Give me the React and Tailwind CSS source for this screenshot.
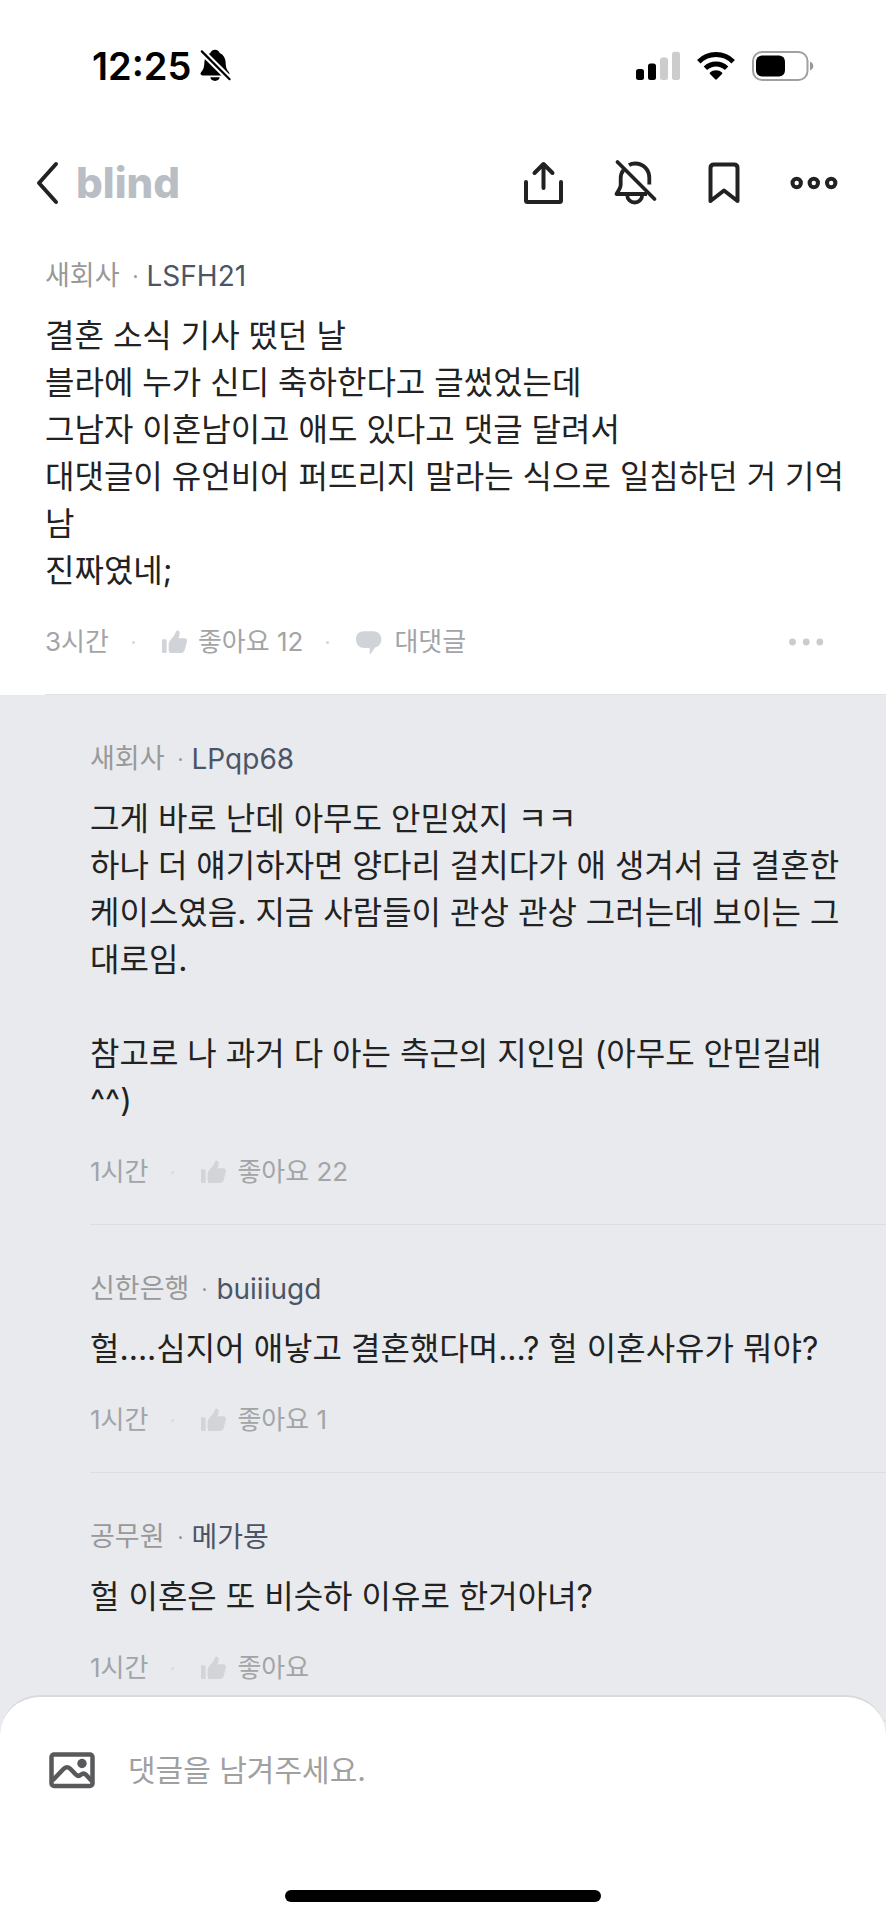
import React from "react";

const LINE = "#222222";

function SilentBell() {
  return (
    <svg width="34" height="34" viewBox="0 0 34 34" aria-hidden="true">
      <path d="M16 .8c-2.400 0-4.200 1.300-4.700 3.200C7.500 5.700 5.600 9 5.400 13c-.2 5.200-.8 7.200-3.200 10-1.400 1.700-.4 3.400 1.400 3.400h24.800c1.800 0 2.800-1.700 1.400-3.400-2.400-2.800-3-4.800-3.200-10-.2-4-2.100-7.300-5.900-9C20.200 2.100 18.400.8 16 .8z" fill="#000" />
      <path d="M11.300 28.300h9.400c-.3 2.200-2.300 3.600-4.700 3.600s-4.400-1.400-4.700-3.600z" fill="#000" />
      <path d="M1.500 1.100 31.900 31.500" stroke="#fff" strokeWidth="6.400" />
      <path d="M2.800 2.400 30.600 30.200" stroke="#000" strokeWidth="2.200" strokeLinecap="round" />
    </svg>
  );
}

function Signal() {
  return (
    <svg width="44" height="30" viewBox="0 0 44 30" aria-hidden="true">
      <rect x="0" y="18" width="8" height="11" rx="2.500" fill="#000" />
      <rect x="12" y="12.500" width="8" height="16.500" rx="2.500" fill="#000" />
      <rect x="24" y="6.500" width="8" height="22.500" rx="2.500" fill="#ccc" />
      <rect x="36" y=".8" width="8" height="28.200" rx="2.500" fill="#ccc" />
    </svg>
  );
}

function Wifi() {
  return (
    <svg width="38" height="30" viewBox="0 0 38 30" aria-hidden="true">
      <g fill="none" stroke="#000" strokeWidth="5">
        <path d="M1.800 10.700C11.500 1.200 26.500 1.200 36.200 10.700" />
        <path d="M8.400 17.300c6-5.700 15.200-5.700 21.200 0" />
      </g>
      <path d="M13 21.600c3.500-3 8.500-3 12 0 .5.500.5 1 0 1.500l-5.200 5.200c-.5.500-1.100.5-1.600 0L13 23.100c-.5-.5-.5-1 0-1.500z" fill="#000" />
    </svg>
  );
}

function Battery() {
  return (
    <svg width="62" height="30" viewBox="0 0 62 30" aria-hidden="true">
      <rect x="1" y="1" width="54.500" height="28" rx="9" fill="none" stroke="#a0a0a0" strokeWidth="2" />
      <rect x="4" y="4.500" width="29" height="21" rx="6" fill="#000" />
      <path d="M58 10.500c2 .8 3.300 2.400 3.300 4.500s-1.300 3.700-3.300 4.500z" fill="#999" />
    </svg>
  );
}

function ThumbIcon({ className }) {
  return (
    <svg width="26" height="25" viewBox="0 0 78 75" className={className} aria-hidden="true">
      <rect x="0" y="28" width="14" height="41" rx="4" fill="currentColor" />
      <path d="M20 43q0-8 6-14l11-13 5-11q2-5 7-3 5 2 4 9l-3 14h17q9 0 8 9l-7 26q-3 9-11 9H27q-7 0-7-7z" fill="currentColor" />
    </svg>
  );
}

function BubbleIcon({ className }) {
  return (
    <svg width="26" height="25" viewBox="0 0 78 75" className={className} aria-hidden="true">
      <path d="M24 4h28c14 0 24 9 24 24 0 13-7 22-18 24L44 71c-1 1-3 1-3-1V54H24C9 54 0 43 0 28S9 4 24 4z" fill="currentColor" />
    </svg>
  );
}

function NavBar() {
  return (
    <header className="flex h-[102px] shrink-0 items-center justify-between pr-12 pl-8">
      <a href="#back" aria-label="뒤로" className="flex items-center">
        <svg width="44" height="44" viewBox="0 0 44 44" fill="none" stroke={LINE} strokeWidth="4" strokeLinecap="round" strokeLinejoin="round" aria-hidden="true">
          <path d="M24 3 7 22l17 19" />
        </svg>
        <span className="text-[42px] leading-[44px] font-extrabold text-[#b9bdc4]">blind</span>
      </a>
      <div className="flex items-center gap-11">
        <button type="button" aria-label="공유">
          <svg width="48" height="44" viewBox="0 0 48 44" fill="none" stroke={LINE} strokeWidth="4" strokeLinecap="round" strokeLinejoin="round" aria-hidden="true">
            <path d="M21.500 27V3.500M12.500 12l9-9 9 9M4 21v18.500q0 1.500 1.500 1.500h32q1.500 0 1.500-1.500V21" />
          </svg>
        </button>
        <button type="button" aria-label="알림 끄기">
          <svg width="44" height="44" viewBox="0 0 44 44" fill="none" stroke={LINE} strokeWidth="3.800" strokeLinejoin="round" className="overflow-visible" aria-hidden="true">
            <path d="M15 4.200c1.800-1.200 4-1.700 6.200-1.700 8.200 0 14.100 6.200 14.100 14.500v6.500" />
            <path d="M9.500 9C7.500 11.500 6.700 14 6.700 17.300V24c0 3-1.500 4-4.200 9H33" />
            <path d="M13.300 34.500a7.400 7 0 0 0 14.800 0" />
            <path d="M3.500 1 40.500 38" strokeLinecap="round" />
          </svg>
        </button>
        <button type="button" aria-label="북마크">
          <svg width="44" height="44" viewBox="0 0 44 44" fill="none" stroke={LINE} strokeWidth="4" strokeLinejoin="round" aria-hidden="true">
            <path d="M8.500 40V7q0-3.500 3.500-3.500h20q3.500 0 3.500 3.500v33L22 29.500z" />
          </svg>
        </button>
        <button type="button" aria-label="더보기">
          <svg width="48" height="44" viewBox="0 0 48 44" fill="none" stroke={LINE} strokeWidth="4" aria-hidden="true">
            <circle cx="6.700" cy="22" r="4.200" />
            <circle cx="23.800" cy="22" r="4.200" />
            <circle cx="41.200" cy="22" r="4.200" />
          </svg>
        </button>
      </div>
    </header>
  );
}

function Author({ company, name }) {
  return (
    <div className="flex items-center text-[27px] leading-9">
      <span className="text-[#999]">{company}</span>
      <span className="mr-[10px] ml-[14px] size-[3px] rounded-full bg-[#999]" />
      <a href="#author" className="text-[28px] text-[#4b5566]">{name}</a>
    </div>
  );
}

function Dot({ className }) {
  return <span className={`mr-[27px] ml-[23px] size-[3px] rounded-full ${className}`} />;
}

function Meta({ time, likes, iconColor, dotColor, reply }) {
  return (
    <div className="mt-[30px] flex h-9 items-center text-[26px] leading-9 text-[#a3a4a6]">
      <time>{time}</time>
      <Dot className={dotColor} />
      <button type="button" className="flex items-center gap-[10px]">
        <ThumbIcon className={iconColor} />
        <span>좋아요{likes ? ` ${likes}` : ""}</span>
      </button>
      {reply && (
        <>
          <Dot className={dotColor} />
          <button type="button" className="flex items-center gap-[12px]">
            <BubbleIcon className={iconColor} />
            <span>대댓글</span>
          </button>
          <button type="button" aria-label="댓글 메뉴" className="mr-[22px] ml-auto">
            <svg width="36" height="8" viewBox="0 0 36 8" fill="#ccc" aria-hidden="true">
              <circle cx="4.500" cy="4" r="3.400" />
              <circle cx="18.200" cy="4" r="3.400" />
              <circle cx="31.800" cy="4" r="3.400" />
            </svg>
          </button>
        </>
      )}
    </div>
  );
}

function Body({ children }) {
  return (
    <p className="mt-[18px] text-[32px] leading-[47px] break-all whitespace-pre-line text-[#222]">{children}</p>
  );
}

const replies = [
  {
    company: "새회사",
    name: "LPqp68",
    text: "그게 바로 난데 아무도 안믿었지 ㅋㅋ\n하나 더 얘기하자면 양다리 걸치다가 애 생겨서 급 결혼한 케이스였음. 지금 사람들이 관상 관상 그러는데 보이는 그대로임.\n\n참고로 나 과거 다 아는 측근의 지인임 (아무도 안믿길래\n^^)",
    likes: 22,
  },
  {
    company: "신한은행",
    name: "buiiiugd",
    text: "헐....심지어 애낳고 결혼했다며...? 헐 이혼사유가 뭐야?",
    likes: 1,
  },
  { company: "공무원", name: "메가몽", text: "헐 이혼은 또 비슷하 이유로 한거아녀?", likes: 0 },
];

export default function App() {
  return (
    <div className="flex h-screen flex-col bg-white font-[Inter,'Noto_Sans_CJK_KR',sans-serif]">
      <div className="flex h-[132px] shrink-0 items-center justify-between pr-[72px] pl-[92px]">
        <div className="flex items-center gap-2">
          <span className="text-[38px] leading-[44px] font-semibold text-black">12:25</span>
          <SilentBell />
        </div>
        <div className="flex items-center gap-[17px]">
          <Signal />
          <Wifi />
          <Battery />
        </div>
      </div>
      <NavBar />
      <main className="min-h-0 flex-1 overflow-y-auto bg-[#e8eaee] [scrollbar-width:none]">
        <article className="bg-white pt-6 pl-[45px]">
          <div className="border-b border-[#dfe1e5] pr-10 pb-[34px]">
            <Author company="새회사" name="LSFH21" />
            <Body>
              {"결혼 소식 기사 떴던 날\n블라에 누가 신디 축하한다고 글썼었는데\n그남자 이혼남이고 애도 있다고 댓글 달려서\n대댓글이 유언비어 퍼뜨리지 말라는 식으로 일침하던 거 기억남\n진짜였네;"}
            </Body>
            <Meta time="3시간" likes={12} reply iconColor="text-[#d0d3d7]" dotColor="bg-[#d4d6d9]" />
          </div>
        </article>
        <section className="pl-[90px]">
          {replies.map((r) => (
            <article key={r.name} className="border-b border-[#dcdee2] pt-[46px] pr-10 pb-[34px]">
              <Author company={r.company} name={r.name} />
              <Body>{r.text}</Body>
              <Meta time="1시간" likes={r.likes} iconColor="text-[#d2d4d7]" dotColor="bg-[#d9dbdf]" />
            </article>
          ))}
        </section>
      </main>
      <footer className="relative -mt-10 flex shrink-0 flex-col rounded-t-[40px] border-t-2 border-[#d9dade] bg-white pt-[49px] pb-[18px]">
        <div className="flex h-12 items-center gap-8 pr-10 pl-12">
          <button type="button" aria-label="사진 첨부">
            <svg width="48" height="40" viewBox="0 0 48 40" fill="none" stroke="#58595b" strokeWidth="4.500" aria-hidden="true">
              <rect x="3.500" y="4.500" width="41" height="31.500" rx="2.500" />
              <path d="M4.500 30.500 15 19.500q4-4.500 8 0l5 5.200q2.500 2.300 5 0 2.500-2.200 5 0l6 6.500" strokeLinejoin="round" />
              <circle cx="34" cy="13.500" r="4.700" fill="#58595b" stroke="none" />
            </svg>
          </button>
          <input
            type="text"
            aria-label="댓글"
            placeholder="댓글을 남겨주세요."
            className="min-w-0 flex-1 bg-transparent text-[30px] leading-[48px] text-[#222] outline-none placeholder:text-[#a0a0a0]"
          />
        </div>
        <div className="mt-24 h-3 w-[316px] self-center rounded-full bg-black" />
      </footer>
    </div>
  );
}
